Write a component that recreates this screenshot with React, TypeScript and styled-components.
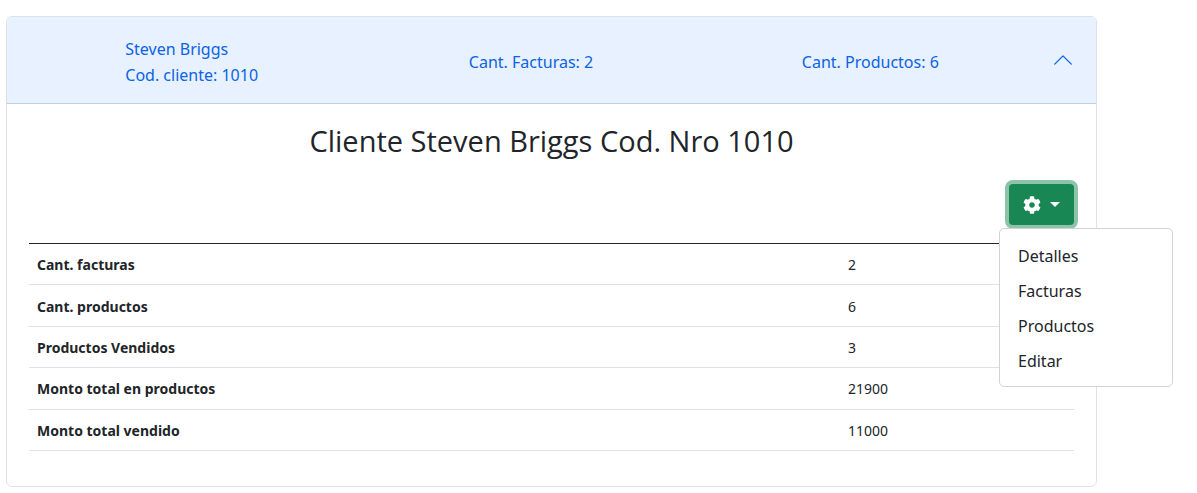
import React, { useState } from "react";
import styled, { createGlobalStyle } from "styled-components";
import { FaCog } from "react-icons/fa";

const GlobalStyle = createGlobalStyle`
  *, *::before, *::after { box-sizing: border-box; }
  body {
    margin: 0;
    background: #fff;
    color: #212529;
    font-family: "Segoe UI", "Noto Sans", "Open Sans", sans-serif;
    font-size: 16px;
    line-height: 26px;
  }
  button { font: inherit; cursor: pointer; }
`;

const Page = styled.main`
  padding: 16px 100px 6px 6px;
`;

const Accordion = styled.section`
  border: 1px solid #dee2e6;
  border-radius: 6px;
`;

const AccordionHeader = styled.button`
  display: flex;
  align-items: center;
  gap: 12px;
  width: 100%;
  padding: 19px 22px 15px 15px;
  border: 0;
  border-bottom: 1px solid #bfcfe9;
  border-radius: 5px 5px 0 0;
  background: #e7f1ff;
  color: #0c63e4;
  text-align: left;
`;

const Summary = styled.span`
  flex: 1;
  display: grid;
  grid-template-columns: repeat(3, 1fr);
  align-items: center;
  justify-items: center;
`;

const SummaryLine = styled.span`
  display: block;
`;

const Chevron = styled.svg`
  width: 22px;
  height: 22px;
  margin-bottom: 4px;
`;

const AccordionBody = styled.div`
  padding: 18px 22px 35px;
`;

const Title = styled.h2`
  margin: 0 0 24px;
  font-family: "Segoe UI", "Open Sans", "Noto Sans", sans-serif;
  font-size: 29px;
  font-weight: 400;
  line-height: 38px;
  text-align: center;
`;

const Toolbar = styled.div`
  display: flex;
  justify-content: flex-end;
  margin-bottom: 18px;
`;

const Dropdown = styled.div`
  position: relative;
`;

const DropdownToggle = styled.button`
  display: flex;
  align-items: center;
  gap: 9px;
  height: 41px;
  padding: 0 14px;
  border: 0;
  border-radius: 4px;
  background: #198754;
  color: #fff;
  box-shadow: 0 0 0 4px rgba(25, 135, 84, 0.5);
`;

const Caret = styled.span`
  border-top: 5px solid;
  border-left: 5px solid transparent;
  border-right: 5px solid transparent;
`;

const Menu = styled.ul`
  position: absolute;
  top: 44px;
  left: -10px;
  z-index: 1;
  width: 174px;
  margin: 0;
  padding: 10px 0 7px;
  border: 1px solid #d3d3d3;
  border-radius: 5px;
  background: #fff;
  list-style: none;
`;

const MenuLink = styled.a`
  display: block;
  padding: 4px 18px;
  color: #212529;
  line-height: 27px;
  text-decoration: none;
`;

const Table = styled.table`
  width: 100%;
  height: 208px;
  border-collapse: collapse;
  border-top: 1px solid #212529;
  font-size: 14px;
  line-height: 24px;
`;

const Row = styled.tr`
  border-bottom: 1px solid #dee2e6;
`;

const RowLabel = styled.th`
  padding: 9px 8px 7px;
  font-weight: 700;
  text-align: left;
`;

const RowValue = styled.td`
  width: 234px;
  padding: 9px 8px 7px;
`;

const rows = [
  ["Cant. facturas", 2],
  ["Cant. productos", 6],
  ["Productos Vendidos", 3],
  ["Monto total en productos", 21900],
  ["Monto total vendido", 11000],
];

const actions = ["Detalles", "Facturas", "Productos", "Editar"];

export default function App() {
  const [expanded, setExpanded] = useState(true);
  const [menuOpen, setMenuOpen] = useState(true);

  return (
    <>
      <GlobalStyle />
      <Page>
        <Accordion>
          <AccordionHeader
            type="button"
            aria-expanded={expanded}
            onClick={() => setExpanded(!expanded)}
          >
            <Summary>
              <span>
                <SummaryLine>Steven Briggs</SummaryLine>
                <SummaryLine>Cod. cliente: 1010</SummaryLine>
              </span>
              <span>Cant. Facturas: 2</span>
              <span>Cant. Productos: 6</span>
            </Summary>
            <Chevron viewBox="0 0 16 16" aria-hidden="true">
              <path
                d="M2 11 8 5l6 6"
                fill="none"
                stroke="currentColor"
                strokeLinecap="round"
                strokeLinejoin="round"
              />
            </Chevron>
          </AccordionHeader>
          {expanded && (
            <AccordionBody>
              <Title>Cliente Steven Briggs Cod. Nro 1010</Title>
              <Toolbar>
                <Dropdown>
                  <DropdownToggle
                    type="button"
                    aria-label="Opciones"
                    aria-expanded={menuOpen}
                    onClick={() => setMenuOpen(!menuOpen)}
                  >
                    <FaCog size={18} aria-hidden="true" />
                    <Caret />
                  </DropdownToggle>
                  {menuOpen && (
                    <Menu>
                      {actions.map((action) => (
                        <li key={action}>
                          <MenuLink href="#">{action}</MenuLink>
                        </li>
                      ))}
                    </Menu>
                  )}
                </Dropdown>
              </Toolbar>
              <Table>
                <tbody>
                  {rows.map(([label, value]) => (
                    <Row key={label}>
                      <RowLabel scope="row">{label}</RowLabel>
                      <RowValue>{value}</RowValue>
                    </Row>
                  ))}
                </tbody>
              </Table>
            </AccordionBody>
          )}
        </Accordion>
      </Page>
    </>
  );
}
